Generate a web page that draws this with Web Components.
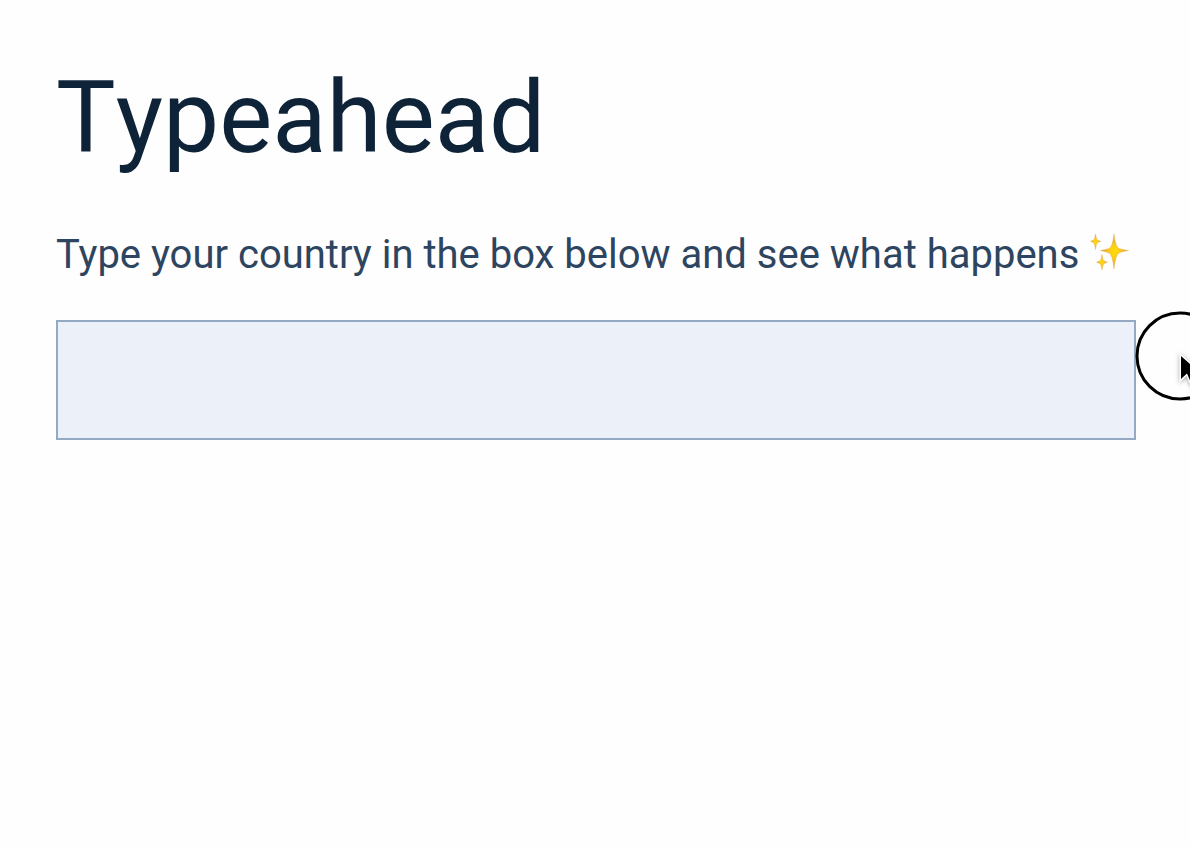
<!DOCTYPE html>
<html lang="en">
<head>
<meta charset="utf-8">
<title>Typeahead</title>
<style>
  body { margin: 0; background: #fefefe; font-family: Roboto, sans-serif; overflow-x: hidden; }
</style>
</head>
<body>
<typeahead-page>
  <span slot="title">Typeahead</span>
  <typeahead-field>Type your country in the box below and see what happens</typeahead-field>
</typeahead-page>
<script>
class SparklesIcon extends HTMLElement {
  constructor() {
    super();
    this.attachShadow({ mode: 'open' }).innerHTML = `
      <style>
        :host { display: inline-block; width: 40px; height: 38px; vertical-align: -4px; }
        svg { display: block; }
      </style>
      <svg width="40" height="38" viewBox="-1 1 40 38" role="img" aria-label="sparkles">
        <defs><radialGradient id="g"><stop offset="0" stop-color="#ffdc0a"/><stop offset=".4" stop-color="#fbcb18"/><stop offset="1" stop-color="#cf9550"/></radialGradient></defs>
        <g fill="url(#g)" stroke="#e6b04a" stroke-width=".4">
          <path d="M24 1Q25.500 14 29 15.500Q32 16.500 38.500 17.500Q32 18.500 29 20Q25.500 22 24 36Q22.500 22 19 20Q16 18.500 10.500 17.500Q16 16.500 19 15.500Q22.500 14 24 1Z"/>
          <path d="M5.500 1Q6.200 6.500 7.800 7.200L10.800 8.200L7.800 9.500Q6.200 10.500 5.500 16.500Q4.800 10.500 3.200 9.500L.5 8.200L3.200 7.200Q4.800 6.500 5.500 1Z"/>
          <path d="M12 21.500Q12.700 27 14.300 28L17.500 29.200L14.300 30.500Q12.700 31.500 12 37Q11.300 31.500 9.700 30.500L6.500 29.200L9.700 28Q11.300 27 12 21.500Z"/>
        </g>
      </svg>`;
  }
}
customElements.define('sparkles-icon', SparklesIcon);

class PointerHalo extends HTMLElement {
  constructor() {
    super();
    this.attachShadow({ mode: 'open' }).innerHTML = `
      <style>
        :host { display: block; width: 88px; height: 88px; pointer-events: none; }
        svg { display: block; overflow: visible; }
        .arrow { filter: drop-shadow(0 1px 2px rgba(0,0,0,.35)); }
      </style>
      <svg width="88" height="88" viewBox="0 0 88 88" aria-hidden="true">
        <circle cx="44" cy="44" r="43" fill="#fefefe" stroke="#000" stroke-width="3"/>
        <path class="arrow" d="M45 44V67L51 61.500L55.500 72L60 70L56 60H63Z" fill="#000" stroke="#fff" stroke-width="3" paint-order="stroke"/>
      </svg>`;
  }
}
customElements.define('pointer-halo', PointerHalo);

class TypeaheadField extends HTMLElement {
  constructor() {
    super();
    this.attachShadow({ mode: 'open' }).innerHTML = `
      <style>
        :host { display: block; }
        label { display: block; font-size: 40px; line-height: 46px; color: #2d4560; }
        .box { position: relative; margin-top: 42px; }
        input { display: block; box-sizing: border-box; width: 100%; height: 120px; margin: 0; padding: 0 32px;
          border: 2px solid #94a9c3; border-radius: 0; background: #ecf0f8; color: #2d4560; font: inherit; font-size: 40px; outline: none; }
        pointer-halo { position: absolute; left: 100%; top: -8px; }
      </style>
      <label for="country"><slot></slot> <sparkles-icon></sparkles-icon></label>
      <div class="box">
        <input id="country" type="text" autocomplete="off">
        <pointer-halo></pointer-halo>
      </div>`;
  }
}
customElements.define('typeahead-field', TypeaheadField);

class TypeaheadPage extends HTMLElement {
  constructor() {
    super();
    this.attachShadow({ mode: 'open' }).innerHTML = `
      <style>
        :host { display: block; padding: 56px 54px 56px 56px; }
        h1 { margin: 0 0 52px; font-size: 100px; line-height: 124px; font-weight: 400; font-kerning: none; color: #0e2338; }
      </style>
      <h1><slot name="title"></slot></h1>
      <slot></slot>`;
  }
}
customElements.define('typeahead-page', TypeaheadPage);
</script>
</body>
</html>
